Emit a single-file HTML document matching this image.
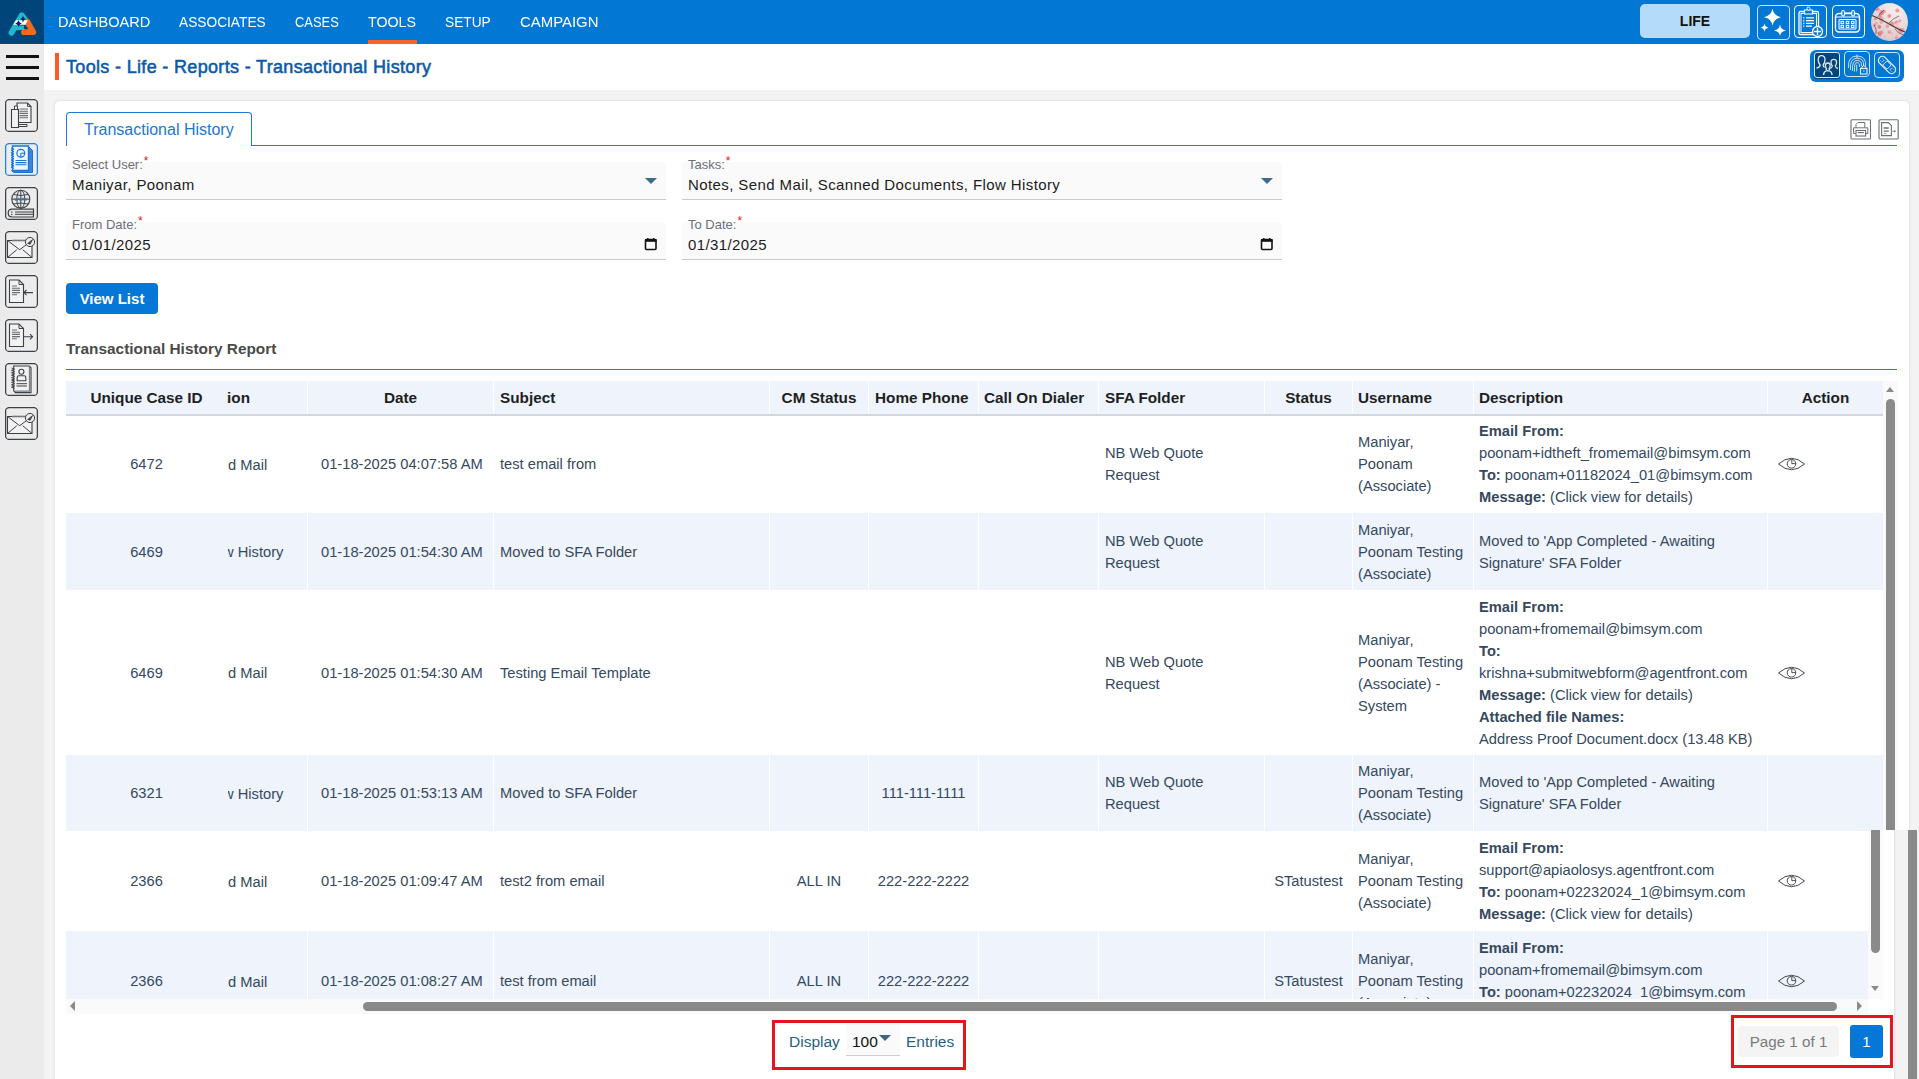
<!DOCTYPE html>
<html><head><meta charset="utf-8"><title>Transactional History</title>
<style>
*{box-sizing:border-box;margin:0;padding:0}
html,body{width:1919px;height:1079px;overflow:hidden}
body{position:relative;font-family:"Liberation Sans", sans-serif;background:#f3f3f3;color:#34495e}
.ab{position:absolute}
.nav{left:0;top:0;width:1919px;height:44px;background:#0277d4}
.logo{left:0;top:0;width:44px;height:44px;background:#00457a}
.ni{position:absolute;top:13px;color:#fff;font-size:15px;line-height:18px;white-space:nowrap}
.side{left:0;top:44px;width:44px;height:1035px;background:#ebebeb}
.sbi{position:absolute;left:5px;width:33px;height:33px;border:1px solid #5a5a5a;border-radius:4px}
.hdr{left:44px;top:44px;width:1875px;height:46px;background:#fff}
.card{left:55px;top:100.5px;width:1854px;height:1000px;background:#fff;border-radius:5px;box-shadow:0 0 3px rgba(0,0,0,.12)}
.lbl{position:absolute;font-size:13px;color:#6b6f7a;line-height:14px;white-space:nowrap}
.lbl i{color:#e8141c;font-style:normal;font-size:12px;position:relative;top:-4px;left:1px}
.val{position:absolute;font-size:15px;letter-spacing:0.4px;color:#1c1c1c;line-height:18px;white-space:nowrap}
.fld{position:absolute;background:#fafafa;border-bottom:1px solid #c9c9c9}
.t{position:absolute;white-space:nowrap;font-size:14.7px;line-height:22px;color:#34495e}
.th{position:absolute;white-space:nowrap;font-size:15.3px;line-height:18px;font-weight:bold;color:#1d1f24}
b{font-weight:bold}
</style></head><body>

<div class="ab nav"></div>
<div class="ab logo"><svg width="44" height="44" viewBox="0 0 44 44">
<path d="M11.5 32.8 L21.8 15.2 L26.8 22.5" fill="none" stroke="#22b8cc" stroke-width="5.8" stroke-linecap="round" stroke-linejoin="round"/>
<path d="M14 27.8 L24 27.8" fill="none" stroke="#22b8cc" stroke-width="4.6"/>
<path d="M27.2 21.5 L33.3 32.2 L24 32.2" fill="none" stroke="#f26a1f" stroke-width="5.8" stroke-linecap="round" stroke-linejoin="round"/>
<path d="M15.9 20.2 L28 20.2 L25.3 24.8 L13.2 24.8 Z" fill="#ffffff"/>
<path d="M18.5 19.8 Q19.1 23 22 23.5 Q19.1 24 18.5 27.6 Q17.9 24 15 23.5 Q17.9 23 18.5 19.8Z" fill="#0b1f66"/>
<path d="M23 15.8 Q23.5 18.5 25.8 19 Q23.5 19.5 23 22.4 Q22.5 19.5 20.2 19 Q22.5 18.5 23 15.8Z" fill="#0b1f66"/>
</svg></div>
<div class="ni" style="left:58px;transform:scaleX(0.972);transform-origin:0 0">DASHBOARD</div>
<div class="ni" style="left:178.5px;transform:scaleX(0.915);transform-origin:0 0">ASSOCIATES</div>
<div class="ni" style="left:294.5px;transform:scaleX(0.86);transform-origin:0 0">CASES</div>
<div class="ni" style="left:368px;transform:scaleX(0.95);transform-origin:0 0">TOOLS</div>
<div class="ni" style="left:445.3px;transform:scaleX(0.913);transform-origin:0 0">SETUP</div>
<div class="ni" style="left:520px;transform:scaleX(0.995);transform-origin:0 0">CAMPAIGN</div>
<div class="ab" style="left:368px;top:40px;width:49px;height:4px;background:#f5642a"></div>
<div class="ab" style="left:1640px;top:4px;width:110px;height:34px;background:#b4dcfa;border-radius:5px;font-weight:bold;font-size:14px;color:#111;text-align:center;line-height:34px">LIFE</div>
<div class="ab" style="left:1757px;top:5px;width:33px;height:35px;border:1.2px solid rgba(255,255,255,.8);border-radius:4px"></div>
<svg class="ab" style="left:1757px;top:5px" width="33" height="35" viewBox="0 0 33 35">
<path d="M15.5 3.6 Q16.6 10.8 24 12.2 Q16.6 13.6 15.5 20.8 Q14.4 13.6 7 12.2 Q14.4 10.8 15.5 3.6Z" fill="#fff"/>
<path d="M7.5 18.6 Q8 22 11.5 22.7 Q8 23.4 7.5 26.8 Q7 23.4 3.5 22.7 Q7 22 7.5 18.6Z" fill="#fff"/>
<path d="M23 19.6 Q23.6 24.6 29 25.4 Q23.6 26.2 23 31 Q22.4 26.2 17 25.4 Q22.4 24.6 23 19.6Z" fill="#fff"/>
</svg>
<div class="ab" style="left:1794px;top:5px;width:33px;height:33px;border:1.3px solid #fff;border-radius:4px"></div>
<svg class="ab" style="left:1794px;top:5px" width="33" height="33" viewBox="0 0 33 33">
<rect x="5" y="6.5" width="19.5" height="23" rx="1.5" fill="none" stroke="#fff" stroke-width="1.3"/>
<rect x="7" y="8.5" width="15.5" height="19" fill="none" stroke="#fff" stroke-width="1"/>
<path d="M10.5 5 h8 v4 h-8z" fill="#0277d4" stroke="#fff" stroke-width="1.2"/>
<circle cx="14.5" cy="3.6" r="1.6" fill="#0277d4" stroke="#fff" stroke-width="1"/>
<path d="M12 12.8h8M12 15.6h8M12 18.4h8M12 21.2h6" stroke="#fff" stroke-width="1.3"/>
<path d="M9.3 12.8h1M9.3 15.6h1M9.3 18.4h1M9.3 21.2h1" stroke="#fff" stroke-width="1.6"/>
<circle cx="23.5" cy="26.5" r="5" fill="#0277d4" stroke="#fff" stroke-width="1.3"/>
<path d="M23.5 23v7M20 26.5h7" stroke="#fff" stroke-width="1.3"/>
</svg>
<div class="ab" style="left:1832px;top:5px;width:33px;height:33px;border:1.3px solid #fff;border-radius:4px"></div>
<svg class="ab" style="left:1832px;top:5px" width="33" height="33" viewBox="0 0 33 33">
<rect x="3.5" y="8.5" width="24" height="18.5" rx="3.5" fill="none" stroke="#fff" stroke-width="1.4"/>
<rect x="7" y="14.5" width="17" height="9.5" rx="1" fill="none" stroke="#fff" stroke-width="1.1"/>
<path d="M3.5 12h24" stroke="#fff" stroke-width="1"/>
<rect x="9.8" y="5.5" width="2.6" height="5.5" rx="1.3" fill="#0277d4" stroke="#fff" stroke-width="1.1"/>
<rect x="19.8" y="5.5" width="2.6" height="5.5" rx="1.3" fill="#0277d4" stroke="#fff" stroke-width="1.1"/>
<path d="M12.4 8h7.4" stroke="#fff" stroke-width="1.1"/>
<rect x="9" y="16.3" width="2.6" height="2.3" fill="none" stroke="#fff" stroke-width="1"/><rect x="14.2" y="16.3" width="2.6" height="2.3" fill="none" stroke="#fff" stroke-width="1"/><rect x="19.4" y="16.3" width="2.6" height="2.3" fill="none" stroke="#fff" stroke-width="1"/>
<rect x="9" y="20.3" width="2.6" height="2.1" fill="none" stroke="#fff" stroke-width="1"/><rect x="14.2" y="20.3" width="2.6" height="2.1" fill="none" stroke="#fff" stroke-width="1"/><rect x="19.4" y="20.3" width="2.6" height="2.1" fill="none" stroke="#fff" stroke-width="1"/>
</svg>
<div class="ab" style="left:1871px;top:3px;width:37px;height:38px;border-radius:50%;overflow:hidden;background:radial-gradient(circle at 65% 20%,#f5eeee 0%,#eadede 40%,#dcc9ca 75%,#c9b1b3 100%)">
<svg width="37" height="38" viewBox="0 0 37 38">
<g filter="url(#avb)"><circle cx="12.0" cy="5.7" r="1.1" fill="#f4c9cc" opacity="0.75"/><circle cx="3.5" cy="22.1" r="1.3" fill="#e77f86" opacity="0.75"/><circle cx="8.3" cy="23.8" r="1.9" fill="#d9666e" opacity="0.75"/><circle cx="1.8" cy="8.4" r="1.2" fill="#d9666e" opacity="0.75"/><circle cx="5.3" cy="4.5" r="2.3" fill="#ec9aa0" opacity="0.75"/><circle cx="3.8" cy="21.7" r="1.2" fill="#e58a90" opacity="0.75"/><circle cx="2.3" cy="2.3" r="2.1" fill="#d9666e" opacity="0.75"/><circle cx="28.8" cy="17.7" r="1.6" fill="#ec9aa0" opacity="0.75"/><circle cx="29.4" cy="26.6" r="1.9" fill="#f4c9cc" opacity="0.75"/><circle cx="18.3" cy="13.1" r="2.0" fill="#e77f86" opacity="0.75"/><circle cx="4.4" cy="15.9" r="1.2" fill="#d9666e" opacity="0.75"/><circle cx="20.6" cy="30.0" r="1.5" fill="#f1b7bb" opacity="0.75"/><circle cx="22.0" cy="22.0" r="2.3" fill="#f1b7bb" opacity="0.75"/><circle cx="26.0" cy="24.6" r="2.3" fill="#f1b7bb" opacity="0.75"/><circle cx="26.5" cy="33.7" r="2.5" fill="#f1b7bb" opacity="0.75"/><circle cx="16.6" cy="20.9" r="2.3" fill="#f4c9cc" opacity="0.75"/><circle cx="10.3" cy="15.8" r="2.4" fill="#ec9aa0" opacity="0.75"/><circle cx="5.6" cy="6.7" r="1.4" fill="#d9666e" opacity="0.75"/><circle cx="5.4" cy="20.3" r="1.5" fill="#ec9aa0" opacity="0.75"/><circle cx="25.5" cy="19.6" r="2.1" fill="#e77f86" opacity="0.75"/><circle cx="16.9" cy="33.1" r="2.1" fill="#f4c9cc" opacity="0.75"/><circle cx="7.7" cy="6.2" r="1.1" fill="#e77f86" opacity="0.75"/><circle cx="21.0" cy="20.4" r="2.0" fill="#e77f86" opacity="0.75"/><circle cx="9.3" cy="13.2" r="1.2" fill="#d9666e" opacity="0.75"/><circle cx="3.2" cy="3.9" r="1.4" fill="#e58a90" opacity="0.75"/><circle cx="6.0" cy="0.9" r="1.8" fill="#ec9aa0" opacity="0.75"/><circle cx="25.5" cy="34.7" r="1.5" fill="#e58a90" opacity="0.75"/><circle cx="31.9" cy="26.5" r="1.6" fill="#ec9aa0" opacity="0.75"/><circle cx="13.2" cy="8.5" r="1.8" fill="#e58a90" opacity="0.75"/><circle cx="8.3" cy="30.8" r="2.3" fill="#d9666e" opacity="0.75"/><circle cx="10.3" cy="9.8" r="2.5" fill="#d9666e" opacity="0.75"/><circle cx="29.9" cy="27.5" r="2.6" fill="#e77f86" opacity="0.75"/><circle cx="8.2" cy="8.6" r="1.3" fill="#f4c9cc" opacity="0.75"/><circle cx="26.3" cy="7.6" r="2.0" fill="#e77f86" opacity="0.75"/><circle cx="29.6" cy="36.9" r="1.6" fill="#e77f86" opacity="0.75"/><circle cx="5.4" cy="31.4" r="1.6" fill="#f4c9cc" opacity="0.75"/><circle cx="18.5" cy="29.0" r="1.9" fill="#ec9aa0" opacity="0.75"/><circle cx="2.3" cy="28.1" r="2.3" fill="#f4c9cc" opacity="0.75"/><circle cx="26.8" cy="21.1" r="1.8" fill="#f4c9cc" opacity="0.75"/><circle cx="17.9" cy="29.5" r="1.1" fill="#ec9aa0" opacity="0.75"/><circle cx="10.2" cy="29.3" r="1.9" fill="#e77f86" opacity="0.75"/><circle cx="16.4" cy="23.3" r="1.8" fill="#e58a90" opacity="0.75"/><circle cx="10.3" cy="19.3" r="1.8" fill="#ec9aa0" opacity="0.75"/>
<path d="M0 12 Q10 16 20 22 T37 30" stroke="#4a3434" stroke-width="1.1" fill="none"/>
<path d="M6 15 Q9 10 13 7M17 21 Q22 15 28 13M3 22 Q6 26 5 31M24 26 Q27 31 33 32" stroke="#5e4040" stroke-width="0.7" fill="none"/>
</g>
<defs><filter id="avb"><feGaussianBlur stdDeviation="0.35"/></filter></defs>
</svg></div>
<div class="ab side"></div>
<div class="ab" style="left:6px;top:55px;width:33px;height:3px;background:#111"></div>
<div class="ab" style="left:6px;top:66px;width:33px;height:3px;background:#111"></div>
<div class="ab" style="left:6px;top:77px;width:33px;height:3px;background:#111"></div>
<svg class="ab" style="left:5px;top:99px" width="33" height="33" viewBox="0 0 33 33"><rect x="0.6" y="0.6" width="31.8" height="31.8" rx="3.5" fill="#ececec" stroke="#3f4247" stroke-width="1.3"/><path d="M12 4h10.5l3.5 3.5v16H12z" fill="#f2f2f2" stroke="#3d4045" stroke-width="1.1"/><path d="M22.5 4v3.5H26" fill="none" stroke="#3d4045" stroke-width="0.9"/><path d="M9.5 7h3v18.5h9.5v2h-12.5z" fill="#f2f2f2" stroke="#3d4045" stroke-width="1"/><path d="M6.5 10.5h7v18h-7z" fill="#f2f2f2" stroke="#3d4045" stroke-width="1.1"/><path d="M14.5 10h8.5M14.5 12.2h8.5M14.5 14.4h8.5M14.5 16.6h8.5M14.5 18.8h8.5" stroke="#6a6d72" stroke-width="1.1"/></svg>
<svg class="ab" style="left:5px;top:143px" width="33" height="33" viewBox="0 0 33 33"><rect x="0.6" y="0.6" width="31.8" height="31.8" rx="3.5" fill="#ececec" stroke="#1a86e8" stroke-width="1.3"/><path d="M23.5 3.5l4 4v22h-19l-2-2" fill="#3a86dc" stroke="#1b72d6" stroke-width="1"/><path d="M7.5 3h16v24.5h-16z" fill="#eef4fc" stroke="#1b72d6" stroke-width="1.3"/><path d="M6 5l3 1.2-3 1.2 3 1.2-3 1.2 3 1.2-3 1.2 3 1.2-3 1.2 3 1.2-3 1.2 3 1.2-3 1.2 3 1.2-3 1.2 3 1.2-3 1.2 3 1.2" fill="none" stroke="#1b72d6" stroke-width="1"/><circle cx="15.8" cy="10.2" r="3.9" fill="none" stroke="#1b72d6" stroke-width="1.2"/><path d="M15.8 10.2h3.9M15.8 10.2v3.9" stroke="#1b72d6" stroke-width="1"/><path d="M10.5 17.5h11M10.5 19.6h11M10.5 21.7h11" stroke="#1b72d6" stroke-width="1.1"/></svg>
<svg class="ab" style="left:5px;top:187px" width="33" height="33" viewBox="0 0 33 33"><rect x="0.6" y="0.6" width="31.8" height="31.8" rx="3.5" fill="#ececec" stroke="#3f4247" stroke-width="1.3"/><circle cx="15.8" cy="12.2" r="9" fill="none" stroke="#3d4045" stroke-width="1.1"/><ellipse cx="15.8" cy="12.2" rx="4" ry="9" fill="none" stroke="#3d4045" stroke-width="1"/><path d="M15.8 3.2v18M6.8 12.2h18M8.5 7.5q7.3 2 14.6 0M8.5 17q7.3-2 14.6 0" fill="none" stroke="#3d4045" stroke-width="1"/><path d="M9.5 10.8l1 2.8 1-2.2 1 2.2 1-2.8M13.8 10.8l1 2.8 1-2.2 1 2.2 1-2.8M18.1 10.8l1 2.8 1-2.2 1 2.2 1-2.8" fill="none" stroke="#3a6fb0" stroke-width="0.8"/><path d="M7 22.2h21.5v7.8H7q-3.8 0-3.8-3.9T7 22.2z" fill="#e8e8e8" stroke="#3d4045" stroke-width="1.2"/><path d="M10 25h18M10 27.3h18M6 25h1.5M6 27.3h1.5" stroke="#3d4045" stroke-width="1"/></svg>
<svg class="ab" style="left:5px;top:231px" width="33" height="33" viewBox="0 0 33 33"><rect x="0.6" y="0.6" width="31.8" height="31.8" rx="3.5" fill="#ececec" stroke="#3f4247" stroke-width="1.3"/><path d="M2.5 9.5h24.5v17H2.5z" fill="#f2f2f2" stroke="#3d4045" stroke-width="1.1"/><path d="M2.5 9.5l12.2 9.2 12.3-9.2M2.5 26.5l9.3-7.8M27 26.5l-9.3-7.8" fill="none" stroke="#3d4045" stroke-width="1"/><path d="M7 9.5h15" stroke="#777" stroke-width="1.6"/><circle cx="25" cy="11" r="4.6" fill="#ececec" stroke="#3d4045" stroke-width="1"/><path d="M22.6 12.4l5-3.8-2.6 4.8-1-.8z" fill="#3d4045" stroke="#3d4045" stroke-width="0.8"/></svg>
<svg class="ab" style="left:5px;top:275px" width="33" height="33" viewBox="0 0 33 33"><rect x="0.6" y="0.6" width="31.8" height="31.8" rx="3.5" fill="#ececec" stroke="#3f4247" stroke-width="1.3"/><path d="M4.5 5h9.5l4.5 4.5V27.5H4.5z" fill="#f2f2f2" stroke="#3d4045" stroke-width="1.1"/><path d="M14 5v4.5h4.5" fill="none" stroke="#3d4045" stroke-width="1"/><path d="M7 11h5M7 13.2h8M7 15.4h8M7 17.6h8M7 19.8h5" stroke="#6a6d72" stroke-width="1.1"/><path d="M28 17.6h-9M21.5 15l-2.6 2.6 2.6 2.6" fill="none" stroke="#3d4045" stroke-width="1.1"/></svg>
<svg class="ab" style="left:5px;top:319px" width="33" height="33" viewBox="0 0 33 33"><rect x="0.6" y="0.6" width="31.8" height="31.8" rx="3.5" fill="#ececec" stroke="#3f4247" stroke-width="1.3"/><path d="M4.5 5h9.5l4.5 4.5V27.5H4.5z" fill="#f2f2f2" stroke="#3d4045" stroke-width="1.1"/><path d="M14 5v4.5h4.5" fill="none" stroke="#3d4045" stroke-width="1"/><path d="M7 11h5M7 13.2h8M7 15.4h8M7 17.6h8M7 19.8h5" stroke="#6a6d72" stroke-width="1.1"/><path d="M18.5 17.8h9.5M25 15.2l2.6 2.6-2.6 2.6" fill="none" stroke="#3d4045" stroke-width="1.1"/></svg>
<svg class="ab" style="left:5px;top:363px" width="33" height="33" viewBox="0 0 33 33"><rect x="0.6" y="0.6" width="31.8" height="31.8" rx="3.5" fill="#ececec" stroke="#3f4247" stroke-width="1.3"/><path d="M8.7 3h15.5l1.8 1.8v24.8H10.5l-1.8-1.8z" fill="#f2f2f2" stroke="#3d4045" stroke-width="1.1"/><path d="M24.5 3.5v24.6H10" fill="none" stroke="#7a7d82" stroke-width="1.2"/><path d="M6.5 5l3 1.2-3 1.2 3 1.2-3 1.2 3 1.2-3 1.2 3 1.2-3 1.2 3 1.2-3 1.2 3 1.2-3 1.2 3 1.2-3 1.2 3 1.2-3 1.2 3 1.2" fill="none" stroke="#3d4045" stroke-width="1"/><circle cx="16.4" cy="8.8" r="2.5" fill="none" stroke="#3d4045" stroke-width="1.1"/><path d="M12.2 17.7v-3.2q0-1.7 1.7-1.7h5.2q1.7 0 1.7 1.7v3.2z" fill="none" stroke="#3d4045" stroke-width="1.1"/><path d="M11.5 20.7h10.5M11.5 23h10.5" stroke="#3d4045" stroke-width="1"/></svg>
<svg class="ab" style="left:5px;top:407px" width="33" height="33" viewBox="0 0 33 33"><rect x="0.6" y="0.6" width="31.8" height="31.8" rx="3.5" fill="#ececec" stroke="#3f4247" stroke-width="1.3"/><path d="M2.5 9.5h24.5v17H2.5z" fill="#f2f2f2" stroke="#3d4045" stroke-width="1.1"/><path d="M2.5 9.5l12.2 9.2 12.3-9.2M2.5 26.5l9.3-7.8M27 26.5l-9.3-7.8" fill="none" stroke="#3d4045" stroke-width="1"/><path d="M7 9.5h15" stroke="#777" stroke-width="1.6"/><circle cx="25" cy="11" r="4.6" fill="#ececec" stroke="#3d4045" stroke-width="1"/><path d="M22.6 12.4l5-3.8-2.6 4.8-1-.8z" fill="#3d4045" stroke="#3d4045" stroke-width="0.8"/></svg>
<div class="ab hdr"></div>
<div class="ab" style="left:55px;top:53px;width:4px;height:27px;background:#fb5a26"></div>
<div class="ab" style="left:66px;top:57px;font-size:18px;line-height:21px;color:#0b5aa8;letter-spacing:0.33px;-webkit-text-stroke:0.55px #0b5aa8;white-space:nowrap">Tools - Life - Reports - Transactional History</div>
<div class="ab" style="left:1810px;top:50px;width:94px;height:32px;background:#0277d4;border-radius:6px"></div>
<div class="ab" style="left:1814px;top:52px;width:26px;height:26px;background:#00467e;border:1.2px solid #dfe8ef;border-radius:3px;box-shadow:0 1px 1px rgba(0,0,0,.45)"></div>
<svg class="ab" style="left:1814px;top:52px" width="26" height="26" viewBox="0 0 26 26">
<path d="M2.5 16 Q5.8 15.6 6.2 13.2 Q4.2 11 4.2 7.8 Q4.2 3.6 7.6 3.6 Q11 3.6 11 7.8 Q11 11 9 13.2 Q9.3 14.8 10.6 15.3" fill="none" stroke="#e6e6e6" stroke-width="1.3"/>
<path d="M15.8 16.3 Q18 16 18.3 14 Q17 12.4 17 10.3 Q17 7.3 19.8 7.3 Q22.6 7.3 22.6 10.3 Q22.6 12.4 21.3 14 Q21.6 16 24 16.5" fill="none" stroke="#e6e6e6" stroke-width="1.3"/>
<path d="M13.8 11 Q16.2 11 16.2 13.6 Q16.2 15.4 15 16.8 Q15.2 17.6 16 18 M13.8 11 Q11.4 11 11.4 13.6 Q11.4 15.4 12.6 16.8 Q12.4 17.6 11.6 18" fill="none" stroke="#e6e6e6" stroke-width="1.3"/>
<path d="M9.6 23 Q9.6 18.8 13.8 18.6 Q18 18.8 18 23" fill="none" stroke="#e6e6e6" stroke-width="1.4"/>
</svg>
<div class="ab" style="left:1844px;top:51px;width:26px;height:26px;border:1.2px solid #cfe3f5;border-radius:4px"></div>
<svg class="ab" style="left:1844px;top:51px" width="26" height="26" viewBox="0 0 26 26">
<g fill="none" stroke="#d7e9f7" stroke-width="0.9">
<path d="M4.5 17 Q3.5 5 13 5 Q22.5 5 21.5 15"/>
<path d="M6.5 19 Q5.5 7.2 13 7.2 Q20.5 7.2 19.5 15"/>
<path d="M8.5 20 Q7.8 9.4 13 9.4 Q18.2 9.4 17.4 15"/>
<path d="M10.5 20.5 Q10 11.6 13 11.6 Q16 11.6 15.4 16"/>
<path d="M12.7 20.5 V13.8"/>
<path d="M13 3.5v4"/>
</g>
<rect x="16.5" y="17.5" width="6.5" height="5.5" fill="#0277d4" stroke="#e8f2fa" stroke-width="1.1"/>
<path d="M17.8 17.5v-1.6q2-2.4 4 0v1.6" fill="none" stroke="#e8f2fa" stroke-width="1"/>
<path d="M19.2 20h1.3" stroke="#e8f2fa" stroke-width="1"/>
</svg>
<div class="ab" style="left:1874px;top:52px;width:26px;height:26px;border:1.2px solid #cfe3f5;border-radius:4px"></div>
<svg class="ab" style="left:1874px;top:52px" width="26" height="26" viewBox="0 0 26 26"><g transform="rotate(45 13 13)"><rect x="2.5" y="9" width="21" height="8" rx="4" fill="none" stroke="#e4eef7" stroke-width="1.2"/><rect x="10" y="10" width="6" height="6" fill="none" stroke="#e4eef7" stroke-width="0.9"/><path d="M5 11.5h1.5M5 14.5h1.5M19.5 11.5h1.5M19.5 14.5h1.5M7.5 11.5v3M18.5 11.5v3" stroke="#e4eef7" stroke-width="0.8"/></g></svg>
<div class="ab card"></div>
<div class="ab" style="left:66px;top:112px;width:186px;height:34px;border:1px solid #1f7ad6;border-bottom:none;border-radius:4px 4px 0 0;background:#fff"></div>
<div class="ab" style="left:84px;top:121px;font-size:16px;line-height:18px;color:#1a78d0;white-space:nowrap">Transactional History</div>
<div class="ab" style="left:251px;top:145px;width:1646px;height:1px;background:#1f7ad6"></div>
<svg class="ab" style="left:1850px;top:119px" width="21" height="21" viewBox="0 0 21 21">
<rect x="1" y="0.7" width="19.5" height="19.3" rx="1" fill="#fff" stroke="#6b7075" stroke-width="1.1"/>
<path d="M6 8.5V5.5l2-2h6.8v5" fill="none" stroke="#6b7075" stroke-width="1"/>
<path d="M5.6 14.5H3.6V8.8h14.2v5.7h-2" fill="none" stroke="#6b7075" stroke-width="1"/>
<rect x="6" y="11.5" width="9.6" height="5.5" fill="none" stroke="#6b7075" stroke-width="1.1"/>
<path d="M7.8 13.6h6" stroke="#6b7075" stroke-width="1.2"/>
</svg>
<svg class="ab" style="left:1878px;top:119px" width="21" height="21" viewBox="0 0 21 21">
<rect x="1" y="0.7" width="19.3" height="19.3" rx="1" fill="#fff" stroke="#6b7075" stroke-width="1.1"/>
<path d="M19.8 2v17.5" stroke="#b8bcc0" stroke-width="1"/>
<path d="M3.6 3.6h6.8l3 3v10h-9.8z" fill="none" stroke="#6b7075" stroke-width="1.1"/>
<path d="M5.6 9h5.2M5.6 12.2h5.2" stroke="#6b7075" stroke-width="1.3"/><path d="M5.6 14.5h3" stroke="#9aa0a5" stroke-width="0.9"/>
<path d="M13.4 12.2h3" stroke="#9aa0a5" stroke-width="1"/><path d="M16.2 10.8l1.8 1.4-1.8 1.4z" fill="#6b7075"/>
</svg>
<div class="fld" style="left:66px;top:162px;width:600px;height:38px;border-radius:4px 4px 0 0"></div>
<div class="lbl" style="left:72px;top:157.7px">Select User:<i>*</i></div>
<div class="val" style="left:72px;top:176px">Maniyar, Poonam</div>
<div class="ab" style="left:645px;top:178px;width:0;height:0;border-left:6px solid transparent;border-right:6px solid transparent;border-top:6px solid #3d6c8a"></div>
<div class="fld" style="left:682px;top:162px;width:600px;height:38px;border-radius:4px 4px 0 0"></div>
<div class="lbl" style="left:688px;top:157.7px">Tasks:<i>*</i></div>
<div class="val" style="left:688px;top:176px">Notes, Send Mail, Scanned Documents, Flow History</div>
<div class="ab" style="left:1261px;top:178px;width:0;height:0;border-left:6px solid transparent;border-right:6px solid transparent;border-top:6px solid #3d6c8a"></div>
<div class="fld" style="left:66px;top:222px;width:600px;height:38px;border-radius:4px 4px 0 0"></div>
<div class="lbl" style="left:72px;top:217.7px">From Date:<i>*</i></div>
<div class="val" style="left:72px;top:236px">01/01/2025</div>
<svg class="ab" style="left:644px;top:237px" width="14" height="14" viewBox="0 0 14 14"><rect x="1.5" y="2.5" width="10.5" height="10" rx="1" fill="none" stroke="#111" stroke-width="1.6"/><rect x="1" y="2" width="11.5" height="2.8" fill="#111"/><path d="M3.8 1v2M9.7 1v2" stroke="#111" stroke-width="1.4"/></svg>
<div class="fld" style="left:682px;top:222px;width:600px;height:38px;border-radius:4px 4px 0 0"></div>
<div class="lbl" style="left:688px;top:217.7px">To Date:<i>*</i></div>
<div class="val" style="left:688px;top:236px">01/31/2025</div>
<svg class="ab" style="left:1260px;top:237px" width="14" height="14" viewBox="0 0 14 14"><rect x="1.5" y="2.5" width="10.5" height="10" rx="1" fill="none" stroke="#111" stroke-width="1.6"/><rect x="1" y="2" width="11.5" height="2.8" fill="#111"/><path d="M3.8 1v2M9.7 1v2" stroke="#111" stroke-width="1.4"/></svg>
<div class="ab" style="left:66px;top:283px;width:92px;height:31px;background:#0577d6;border-radius:4px;color:#fff;font-weight:bold;font-size:15px;line-height:31px;text-align:center">View List</div>
<div class="ab" style="left:66px;top:340px;font-size:15.4px;line-height:18px;font-weight:bold;color:#4a4a4a;white-space:nowrap">Transactional History Report</div>
<div class="ab" style="left:66px;top:369px;width:1831px;height:1px;background:#1f7ad6"></div>
<div class="ab" style="left:66px;top:381px;width:1817px;height:33px;background:#eff3fb"></div>
<div class="ab" style="left:307px;top:381px;width:1px;height:33px;background:#fff"></div>
<div class="ab" style="left:493px;top:381px;width:1px;height:33px;background:#fff"></div>
<div class="ab" style="left:769px;top:381px;width:1px;height:33px;background:#fff"></div>
<div class="ab" style="left:868px;top:381px;width:1px;height:33px;background:#fff"></div>
<div class="ab" style="left:978px;top:381px;width:1px;height:33px;background:#fff"></div>
<div class="ab" style="left:1098px;top:381px;width:1px;height:33px;background:#fff"></div>
<div class="ab" style="left:1264px;top:381px;width:1px;height:33px;background:#fff"></div>
<div class="ab" style="left:1352px;top:381px;width:1px;height:33px;background:#fff"></div>
<div class="ab" style="left:1473px;top:381px;width:1px;height:33px;background:#fff"></div>
<div class="ab" style="left:1767px;top:381px;width:1px;height:33px;background:#fff"></div>
<div class="ab" style="left:66px;top:414px;width:1817px;height:2px;background:#d3d6dc"></div>
<div class="th" style="left:66px;width:161px;text-align:center;top:389px">Unique Case ID</div>
<div class="ab" style="left:227px;top:381px;width:80px;height:33px;overflow:hidden"><div class="th" style="right:0;top:8px;left:auto;width:200px;text-align:right;padding-right:57px">Action</div></div>
<div class="th" style="left:308px;width:185px;text-align:center;top:389px">Date</div>
<div class="th" style="left:500px;top:389px">Subject</div>
<div class="th" style="left:770px;width:98px;text-align:center;top:389px">CM Status</div>
<div class="th" style="left:875px;top:389px">Home Phone</div>
<div class="th" style="left:984px;top:389px">Call On Dialer</div>
<div class="th" style="left:1105px;top:389px">SFA Folder</div>
<div class="th" style="left:1265px;width:87px;text-align:center;top:389px">Status</div>
<div class="th" style="left:1358px;top:389px">Username</div>
<div class="th" style="left:1479px;top:389px">Description</div>
<div class="th" style="left:1768px;width:115px;text-align:center;top:389px">Action</div>
<div class="ab" style="left:66px;top:415px;width:1817px;height:585px;overflow:hidden">
<div class="t" style="left:0px;width:161px;text-align:center;top:38.0px">6472</div>
<div class="t" style="left:162px;top:38.5px">d Mail</div>
<div class="t" style="left:255px;top:38.0px">01-18-2025 04:07:58 AM</div>
<div class="t" style="left:434px;top:38.0px">test email from</div>
<div class="t" style="left:1039px;top:27.0px">NB Web Quote</div>
<div class="t" style="left:1039px;top:49.0px">Request</div>
<div class="t" style="left:1292px;top:16.0px">Maniyar,</div>
<div class="t" style="left:1292px;top:38.0px">Poonam</div>
<div class="t" style="left:1292px;top:60.0px">(Associate)</div>
<div class="t" style="left:1413px;top:5.0px"><b>Email From:</b></div>
<div class="t" style="left:1413px;top:27.0px">poonam+idtheft_fromemail@bimsym.com</div>
<div class="t" style="left:1413px;top:49.0px"><b>To:</b> poonam+01182024_01@bimsym.com</div>
<div class="t" style="left:1413px;top:71.0px"><b>Message:</b> (Click view for details)</div>
<svg class="ab" style="left:1711px;top:41.0px" width="29" height="16" viewBox="0 0 29 16"><path d="M1.5 8 Q14.5 -3.5 27.5 8 Q14.5 19.5 1.5 8Z" fill="none" stroke="#3a3f45" stroke-width="0.95"/><circle cx="14.5" cy="7.8" r="4.3" fill="none" stroke="#3a3f45" stroke-width="0.95"/><path d="M14.8 7.6 L14.8 3.7 M14.8 7.6 L18.5 7.6" stroke="#3a3f45" stroke-width="0.9"/></svg>
<div class="ab" style="left:0;top:98px;width:1817px;height:77px;background:#eff3fb"></div>
<div class="ab" style="left:241px;top:98px;width:1px;height:77px;background:#fff"></div>
<div class="ab" style="left:427px;top:98px;width:1px;height:77px;background:#fff"></div>
<div class="ab" style="left:703px;top:98px;width:1px;height:77px;background:#fff"></div>
<div class="ab" style="left:802px;top:98px;width:1px;height:77px;background:#fff"></div>
<div class="ab" style="left:912px;top:98px;width:1px;height:77px;background:#fff"></div>
<div class="ab" style="left:1032px;top:98px;width:1px;height:77px;background:#fff"></div>
<div class="ab" style="left:1198px;top:98px;width:1px;height:77px;background:#fff"></div>
<div class="ab" style="left:1286px;top:98px;width:1px;height:77px;background:#fff"></div>
<div class="ab" style="left:1407px;top:98px;width:1px;height:77px;background:#fff"></div>
<div class="ab" style="left:1701px;top:98px;width:1px;height:77px;background:#fff"></div>
<div class="t" style="left:0px;width:161px;text-align:center;top:125.5px">6469</div>
<div class="ab" style="left:162px;top:126.0px;width:79px;height:22px;overflow:hidden"><div class="t" style="left:-5px;top:0">w History</div></div>
<div class="t" style="left:255px;top:125.5px">01-18-2025 01:54:30 AM</div>
<div class="t" style="left:434px;top:125.5px">Moved to SFA Folder</div>
<div class="t" style="left:1039px;top:114.5px">NB Web Quote</div>
<div class="t" style="left:1039px;top:136.5px">Request</div>
<div class="t" style="left:1292px;top:103.5px">Maniyar,</div>
<div class="t" style="left:1292px;top:125.5px">Poonam Testing</div>
<div class="t" style="left:1292px;top:147.5px">(Associate)</div>
<div class="t" style="left:1413px;top:114.5px">Moved to 'App Completed - Awaiting</div>
<div class="t" style="left:1413px;top:136.5px">Signature' SFA Folder</div>
<div class="t" style="left:0px;width:161px;text-align:center;top:246.5px">6469</div>
<div class="t" style="left:162px;top:247.0px">d Mail</div>
<div class="t" style="left:255px;top:246.5px">01-18-2025 01:54:30 AM</div>
<div class="t" style="left:434px;top:246.5px">Testing Email Template</div>
<div class="t" style="left:1039px;top:235.5px">NB Web Quote</div>
<div class="t" style="left:1039px;top:257.5px">Request</div>
<div class="t" style="left:1292px;top:213.5px">Maniyar,</div>
<div class="t" style="left:1292px;top:235.5px">Poonam Testing</div>
<div class="t" style="left:1292px;top:257.5px">(Associate) -</div>
<div class="t" style="left:1292px;top:279.5px">System</div>
<div class="t" style="left:1413px;top:180.5px"><b>Email From:</b></div>
<div class="t" style="left:1413px;top:202.5px">poonam+fromemail@bimsym.com</div>
<div class="t" style="left:1413px;top:224.5px"><b>To:</b></div>
<div class="t" style="left:1413px;top:246.5px">krishna+submitwebform@agentfront.com</div>
<div class="t" style="left:1413px;top:268.5px"><b>Message:</b> (Click view for details)</div>
<div class="t" style="left:1413px;top:290.5px"><b>Attached file Names:</b></div>
<div class="t" style="left:1413px;top:312.5px">Address Proof Document.docx (13.48 KB)</div>
<svg class="ab" style="left:1711px;top:249.5px" width="29" height="16" viewBox="0 0 29 16"><path d="M1.5 8 Q14.5 -3.5 27.5 8 Q14.5 19.5 1.5 8Z" fill="none" stroke="#3a3f45" stroke-width="0.95"/><circle cx="14.5" cy="7.8" r="4.3" fill="none" stroke="#3a3f45" stroke-width="0.95"/><path d="M14.8 7.6 L14.8 3.7 M14.8 7.6 L18.5 7.6" stroke="#3a3f45" stroke-width="0.9"/></svg>
<div class="ab" style="left:0;top:340px;width:1817px;height:76px;background:#eff3fb"></div>
<div class="ab" style="left:241px;top:340px;width:1px;height:76px;background:#fff"></div>
<div class="ab" style="left:427px;top:340px;width:1px;height:76px;background:#fff"></div>
<div class="ab" style="left:703px;top:340px;width:1px;height:76px;background:#fff"></div>
<div class="ab" style="left:802px;top:340px;width:1px;height:76px;background:#fff"></div>
<div class="ab" style="left:912px;top:340px;width:1px;height:76px;background:#fff"></div>
<div class="ab" style="left:1032px;top:340px;width:1px;height:76px;background:#fff"></div>
<div class="ab" style="left:1198px;top:340px;width:1px;height:76px;background:#fff"></div>
<div class="ab" style="left:1286px;top:340px;width:1px;height:76px;background:#fff"></div>
<div class="ab" style="left:1407px;top:340px;width:1px;height:76px;background:#fff"></div>
<div class="ab" style="left:1701px;top:340px;width:1px;height:76px;background:#fff"></div>
<div class="t" style="left:0px;width:161px;text-align:center;top:367.0px">6321</div>
<div class="ab" style="left:162px;top:367.5px;width:79px;height:22px;overflow:hidden"><div class="t" style="left:-5px;top:0">w History</div></div>
<div class="t" style="left:255px;top:367.0px">01-18-2025 01:53:13 AM</div>
<div class="t" style="left:434px;top:367.0px">Moved to SFA Folder</div>
<div class="t" style="left:803px;width:109px;text-align:center;top:367.0px">111-111-1111</div>
<div class="t" style="left:1039px;top:356.0px">NB Web Quote</div>
<div class="t" style="left:1039px;top:378.0px">Request</div>
<div class="t" style="left:1292px;top:345.0px">Maniyar,</div>
<div class="t" style="left:1292px;top:367.0px">Poonam Testing</div>
<div class="t" style="left:1292px;top:389.0px">(Associate)</div>
<div class="t" style="left:1413px;top:356.0px">Moved to 'App Completed - Awaiting</div>
<div class="t" style="left:1413px;top:378.0px">Signature' SFA Folder</div>
<div class="t" style="left:0px;width:161px;text-align:center;top:455.0px">2366</div>
<div class="t" style="left:162px;top:455.5px">d Mail</div>
<div class="t" style="left:255px;top:455.0px">01-18-2025 01:09:47 AM</div>
<div class="t" style="left:434px;top:455.0px">test2 from email</div>
<div class="t" style="left:704px;width:98px;text-align:center;top:455.0px">ALL IN</div>
<div class="t" style="left:803px;width:109px;text-align:center;top:455.0px">222-222-2222</div>
<div class="t" style="left:1199px;width:87px;text-align:center;top:455.0px">STatustest</div>
<div class="t" style="left:1292px;top:433.0px">Maniyar,</div>
<div class="t" style="left:1292px;top:455.0px">Poonam Testing</div>
<div class="t" style="left:1292px;top:477.0px">(Associate)</div>
<div class="t" style="left:1413px;top:422.0px"><b>Email From:</b></div>
<div class="t" style="left:1413px;top:444.0px">support@apiaolosys.agentfront.com</div>
<div class="t" style="left:1413px;top:466.0px"><b>To:</b> poonam+02232024_1@bimsym.com</div>
<div class="t" style="left:1413px;top:488.0px"><b>Message:</b> (Click view for details)</div>
<svg class="ab" style="left:1711px;top:458.0px" width="29" height="16" viewBox="0 0 29 16"><path d="M1.5 8 Q14.5 -3.5 27.5 8 Q14.5 19.5 1.5 8Z" fill="none" stroke="#3a3f45" stroke-width="0.95"/><circle cx="14.5" cy="7.8" r="4.3" fill="none" stroke="#3a3f45" stroke-width="0.95"/><path d="M14.8 7.6 L14.8 3.7 M14.8 7.6 L18.5 7.6" stroke="#3a3f45" stroke-width="0.9"/></svg>
<div class="ab" style="left:0;top:516px;width:1817px;height:100px;background:#eff3fb"></div>
<div class="ab" style="left:241px;top:516px;width:1px;height:100px;background:#fff"></div>
<div class="ab" style="left:427px;top:516px;width:1px;height:100px;background:#fff"></div>
<div class="ab" style="left:703px;top:516px;width:1px;height:100px;background:#fff"></div>
<div class="ab" style="left:802px;top:516px;width:1px;height:100px;background:#fff"></div>
<div class="ab" style="left:912px;top:516px;width:1px;height:100px;background:#fff"></div>
<div class="ab" style="left:1032px;top:516px;width:1px;height:100px;background:#fff"></div>
<div class="ab" style="left:1198px;top:516px;width:1px;height:100px;background:#fff"></div>
<div class="ab" style="left:1286px;top:516px;width:1px;height:100px;background:#fff"></div>
<div class="ab" style="left:1407px;top:516px;width:1px;height:100px;background:#fff"></div>
<div class="ab" style="left:1701px;top:516px;width:1px;height:100px;background:#fff"></div>
<div class="t" style="left:0px;width:161px;text-align:center;top:555.0px">2366</div>
<div class="t" style="left:162px;top:555.5px">d Mail</div>
<div class="t" style="left:255px;top:555.0px">01-18-2025 01:08:27 AM</div>
<div class="t" style="left:434px;top:555.0px">test from email</div>
<div class="t" style="left:704px;width:98px;text-align:center;top:555.0px">ALL IN</div>
<div class="t" style="left:803px;width:109px;text-align:center;top:555.0px">222-222-2222</div>
<div class="t" style="left:1199px;width:87px;text-align:center;top:555.0px">STatustest</div>
<div class="t" style="left:1292px;top:533.0px">Maniyar,</div>
<div class="t" style="left:1292px;top:555.0px">Poonam Testing</div>
<div class="t" style="left:1292px;top:577.0px">(Associate)</div>
<div class="t" style="left:1413px;top:522.0px"><b>Email From:</b></div>
<div class="t" style="left:1413px;top:544.0px">poonam+fromemail@bimsym.com</div>
<div class="t" style="left:1413px;top:566.0px"><b>To:</b> poonam+02232024_1@bimsym.com</div>
<div class="t" style="left:1413px;top:588.0px"><b>Message:</b> (Click view for details)</div>
<svg class="ab" style="left:1711px;top:558.0px" width="29" height="16" viewBox="0 0 29 16"><path d="M1.5 8 Q14.5 -3.5 27.5 8 Q14.5 19.5 1.5 8Z" fill="none" stroke="#3a3f45" stroke-width="0.95"/><circle cx="14.5" cy="7.8" r="4.3" fill="none" stroke="#3a3f45" stroke-width="0.95"/><path d="M14.8 7.6 L14.8 3.7 M14.8 7.6 L18.5 7.6" stroke="#3a3f45" stroke-width="0.9"/></svg>
</div>
<div class="ab" style="left:1883px;top:381px;width:15px;height:618px;background:#fafafa"></div>
<div class="ab" style="left:1886px;top:387px;width:0;height:0;border-left:4.5px solid transparent;border-right:4.5px solid transparent;border-bottom:5px solid #8a8a8a"></div>
<div class="ab" style="left:1886px;top:399px;width:9px;height:560px;background:#8a8a8a;border-radius:4.5px"></div>
<div class="ab" style="left:66px;top:999px;width:1802px;height:15px;background:#fafafa"></div>
<div class="ab" style="left:70px;top:1001px;width:0;height:0;border-top:5px solid transparent;border-bottom:5px solid transparent;border-right:5px solid #8a8a8a"></div>
<div class="ab" style="left:363px;top:1002px;width:1474px;height:9px;background:#8a8a8a;border-radius:4.5px"></div>
<div class="ab" style="left:1857px;top:1001px;width:0;height:0;border-top:5px solid transparent;border-bottom:5px solid transparent;border-left:5px solid #8a8a8a"></div>
<div class="ab" style="left:1868px;top:830px;width:51px;height:249px;background:#fff"></div>
<div class="ab" style="left:1868px;top:830px;width:15px;height:169px;background:#fafafa"></div>
<div class="ab" style="left:1871px;top:830px;width:9px;height:123px;background:#8a8a8a;border-radius:0 0 4.5px 4.5px"></div>
<div class="ab" style="left:1871px;top:986px;width:0;height:0;border-left:4.5px solid transparent;border-right:4.5px solid transparent;border-top:5px solid #8a8a8a"></div>
<div class="ab" style="left:1894px;top:830px;width:25px;height:249px;background:#f3f3f3;box-shadow:inset 2px 0 2px -1px rgba(0,0,0,.08)"></div>
<div class="ab" style="left:1908px;top:830px;width:9px;height:249px;background:#8a8a8a"></div>
<div class="ab" style="left:772px;top:1020px;width:194px;height:50px;border:3px solid #e8141c"></div>
<div class="ab" style="left:789px;top:1033px;font-size:15.5px;line-height:18px;color:#245f86;white-space:nowrap">Display</div>
<div class="ab" style="left:846px;top:1024px;width:54px;height:32px;background:#fafafa;border-bottom:1px solid #cfcfcf"></div>
<div class="ab" style="left:852px;top:1033px;font-size:15.5px;line-height:18px;color:#111;white-space:nowrap">100</div>
<div class="ab" style="left:879px;top:1035px;width:0;height:0;border-left:6px solid transparent;border-right:6px solid transparent;border-top:6px solid #3f6784"></div>
<div class="ab" style="left:906px;top:1033px;font-size:15.5px;line-height:18px;color:#245f86;white-space:nowrap">Entries</div>
<div class="ab" style="left:1731px;top:1015px;width:162px;height:53px;border:3px solid #e8141c"></div>
<div class="ab" style="left:1738px;top:1026px;width:101px;height:31px;background:#f4f4f4;border-radius:4px;font-size:15.2px;line-height:31px;color:#7a7a7a;text-align:center;white-space:nowrap">Page 1 of 1</div>
<div class="ab" style="left:1850px;top:1025px;width:33px;height:33px;background:#0577d6;border-radius:3px;font-size:15px;line-height:33px;color:#fff;text-align:center">1</div>
</body></html>
